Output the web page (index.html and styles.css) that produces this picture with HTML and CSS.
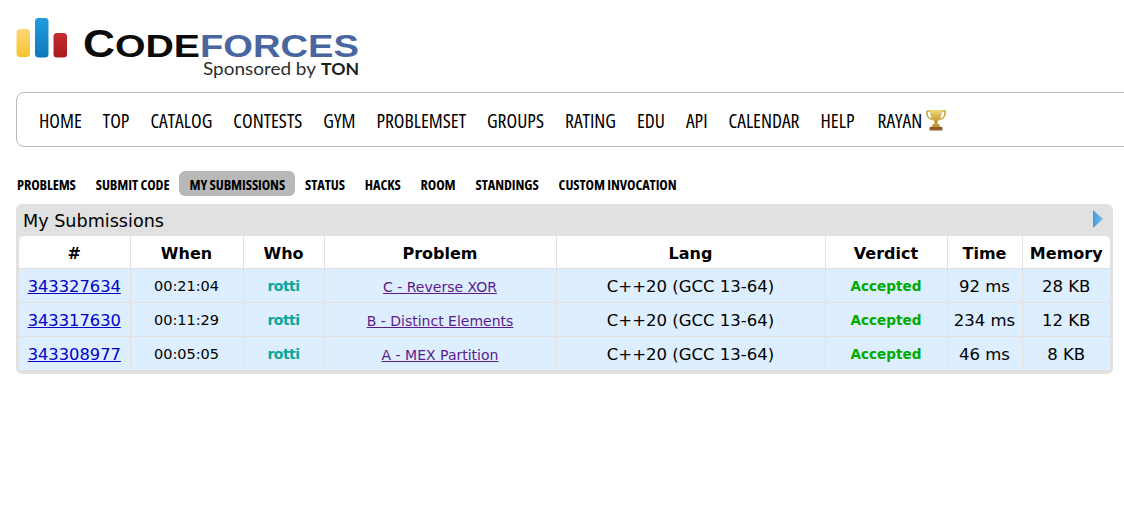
FILE: index.html
```html
<!DOCTYPE html>
<html lang="en">
<head>
<meta charset="utf-8">
<title>My Submissions - Codeforces</title>
<link rel="stylesheet" href="styles.css">
</head>
<body>
<header class="logo-row">
  <svg class="logo" width="380" height="92" viewBox="0 0 380 92">
    <defs>
      <linearGradient id="gy" x1="0" y1="0" x2="0" y2="1"><stop offset="0" stop-color="#fdd77c"/><stop offset="1" stop-color="#f6c32c"/></linearGradient>
      <linearGradient id="gb" x1="0" y1="0" x2="0" y2="1"><stop offset="0" stop-color="#1f9ddc"/><stop offset="1" stop-color="#0f78bd"/></linearGradient>
      <linearGradient id="gr" x1="0" y1="0" x2="0" y2="1"><stop offset="0" stop-color="#c62a2e"/><stop offset="1" stop-color="#a91d22"/></linearGradient>
    </defs>
    <rect x="16.5" y="29" width="13.5" height="28" rx="3.5" fill="url(#gy)"/>
    <rect x="35" y="18" width="13.5" height="39.5" rx="3.5" fill="url(#gb)"/>
    <rect x="53.5" y="33" width="13.5" height="24.5" rx="3.5" fill="url(#gr)"/>
    <text class="lg-c" x="83" y="57" textLength="32" lengthAdjust="spacingAndGlyphs">C</text>
    <text class="lg-ode" x="115" y="57" textLength="85" lengthAdjust="spacingAndGlyphs">ODE</text>
    <text class="lg-f" x="200" y="57" textLength="159" lengthAdjust="spacingAndGlyphs">FORCES</text>
    <text class="lg-sp" x="203" y="75" textLength="113" lengthAdjust="spacingAndGlyphs">Sponsored by</text>
    <text class="lg-ton" x="321" y="75" textLength="38" lengthAdjust="spacingAndGlyphs">TON</text>
  </svg>
</header>
<nav class="menu">
  <a href="#">HOME</a><a href="#">TOP</a><a href="#">CATALOG</a><a href="#">CONTESTS</a><a href="#">GYM</a><a href="#">PROBLEMSET</a><a href="#">GROUPS</a><a href="#">RATING</a><a href="#">EDU</a><a href="#">API</a><a href="#">CALENDAR</a><a href="#">HELP</a>
  <a href="#" class="rayan">RAYAN
    <svg width="22" height="22" viewBox="0 0 22 22">
      <defs><linearGradient id="tr" x1="0" y1="0" x2="0" y2="1"><stop offset="0" stop-color="#f3d774"/><stop offset="1" stop-color="#b98d24"/></linearGradient></defs>
      <path d="M2 2h18v3c0 3-3 5-5.5 5.5" fill="none" stroke="#c9a544" stroke-width="1.6"/>
      <path d="M2 2v3c0 3 3 5 5.5 5.5" fill="none" stroke="#c9a544" stroke-width="1.6"/>
      <path d="M5 1h12c0 6-2 10-4.5 11v3h-3v-3C7 11 5 7 5 1z" fill="url(#tr)"/>
      <path d="M8 15h6l1.5 3h-9z" fill="#c79a3c"/>
      <rect x="4.5" y="18" width="13" height="3.5" rx="1" fill="#8f5a2b"/>
    </svg>
  </a>
</nav>
<nav class="tabs">
  <a href="#">PROBLEMS</a><a href="#">SUBMIT CODE</a><a href="#" class="current">MY SUBMISSIONS</a><a href="#">STATUS</a><a href="#">HACKS</a><a href="#">ROOM</a><a href="#">STANDINGS</a><a href="#">CUSTOM INVOCATION</a>
</nav>
<section class="panel">
  <div class="panel-title">
    <span>My Submissions</span>
    <svg width="10" height="18" viewBox="0 0 10 18"><defs><linearGradient id="ar" x1="0" y1="0" x2="1" y2="0"><stop offset="0" stop-color="#3f9be0"/><stop offset="1" stop-color="#7db9e8"/></linearGradient></defs><path d="M0 0l10 9-10 9z" fill="url(#ar)"/></svg>
  </div>
  <table class="subs">
    <colgroup><col class="c1"><col class="c2"><col class="c3"><col class="c4"><col class="c5"><col class="c6"><col class="c7"><col class="c8"></colgroup>
    <thead>
      <tr><th>#</th><th>When</th><th>Who</th><th>Problem</th><th>Lang</th><th>Verdict</th><th>Time</th><th>Memory</th></tr>
    </thead>
    <tbody>
      <tr><td><a class="sid" href="#">343327634</a></td><td class="small">00:21:04</td><td class="who">rotti</td><td><a class="prob" href="#">C - Reverse XOR</a></td><td>C++20 (GCC 13-64)</td><td class="ok">Accepted</td><td>92 ms</td><td>28 KB</td></tr>
      <tr><td><a class="sid" href="#">343317630</a></td><td class="small">00:11:29</td><td class="who">rotti</td><td><a class="prob" href="#">B - Distinct Elements</a></td><td>C++20 (GCC 13-64)</td><td class="ok">Accepted</td><td>234 ms</td><td>12 KB</td></tr>
      <tr><td><a class="sid" href="#">343308977</a></td><td class="small">00:05:05</td><td class="who">rotti</td><td><a class="prob" href="#">A - MEX Partition</a></td><td>C++20 (GCC 13-64)</td><td class="ok">Accepted</td><td>46 ms</td><td>8 KB</td></tr>
    </tbody>
  </table>
</section>
</body>
</html>
```

FILE: styles.css
```css
html, body { margin: 0; padding: 0; background: #fff; overflow: hidden; }
body { width: 1124px; height: 517px; font-family: "DejaVu Sans", Verdana, sans-serif; color: #000; }

.logo-row { height: 92px; }
.logo { display: block; }
.logo text { font-family: "Liberation Sans", sans-serif; }
.lg-c { font-size: 39px; font-weight: 700; fill: #0b0b0b; }
.lg-ode { font-size: 32px; font-weight: 700; fill: #0b0b0b; }
.lg-f { font-size: 31px; font-weight: 700; fill: #4a66a0; }
.lg-sp { font-size: 17px; fill: #2e2e2e; }
.logo .lg-sp { font-family: "Lato", sans-serif; }
.logo .lg-ton { font-family: "Lato", sans-serif; font-size: 17px; font-weight: 700; fill: #1c1c1c; }

.menu {
  margin-left: 16px;
  width: 1130px;
  height: 51px;
  padding: 2px 0 0 22px;
  border: 1px solid #b9b9b9;
  border-radius: 8px;
  display: flex;
  align-items: center;
  gap: 21px;
  font-family: "Open Sans", sans-serif;
  font-stretch: 75%;
  font-size: 19.6px;
}
.menu a { color: #000; text-decoration: none; white-space: nowrap; }
.menu a.rayan { display: flex; align-items: center; gap: 3px; margin-left: 2px; }
.rayan svg { margin-top: -1px; }

.tabs {
  margin: 24px 0 0 16px;
  height: 25px;
  display: flex;
  align-items: center;
  font-family: "Open Sans", sans-serif;
  font-stretch: 75%;
  font-size: 14.3px;
  letter-spacing: -0.1px;
  font-weight: 700;
}
.tabs a { color: #000; text-decoration: none; padding: 3px 10px 0; line-height: 22px; white-space: nowrap; }
.tabs a:first-child { padding-left: 1px; }
.tabs a.current { background: #b8b8b8; border-radius: 6px; }

.panel {
  margin: 8px 0 0 16px;
  width: 1097px;
  box-sizing: border-box;
  background: #e1e1e1;
  border-radius: 6px;
  padding: 0 3px 4px;
}
.panel-title {
  height: 32px;
  padding: 0 7px 0 4px;
  display: flex;
  align-items: center;
  justify-content: space-between;
  font-size: 17.6px;
}
.panel-title span { padding-top: 2px; }
.panel-title svg { margin-top: -2px; }

.subs {
  width: 1091px;
  table-layout: fixed;
  border-collapse: collapse;
  background: #ddeefe;
}
.c1 { width: 111px; } .c2 { width: 113px; } .c3 { width: 81px; } .c4 { width: 232px; }
.c5 { width: 269px; } .c6 { width: 122px; } .c7 { width: 75px; } .c8 { width: 88px; }
.subs th, .subs td {
  border: 1px solid #e1e1e1;
  text-align: center;
  padding: 0;
  white-space: nowrap;
  box-sizing: border-box;
}
.subs tr > :first-child { border-left: 0; }
.subs tr > :last-child { border-right: 0; }
.subs thead tr > * { border-top: 0; }
.subs tbody tr:last-child > * { border-bottom: 0; }
.subs th { height: 32px; padding-top: 3px; background: #fff; font-size: 16px; font-weight: 700; }
.subs th:first-child { border-top-left-radius: 6px; }
.subs th:last-child { border-top-right-radius: 6px; }
.subs td { height: 34px; padding-top: 2px; font-size: 16.5px; }
.subs td.small { font-size: 14.5px; }
.subs td.who { color: #0ba79a; font-weight: 700; font-size: 14px; letter-spacing: -0.5px; }
.subs td.ok { color: #0a0; font-weight: 700; font-size: 13.6px; }
.sid { font-size: 16.3px; color: #0000c8; }
.prob { font-size: 14px; color: #5c1a8e; }
```
